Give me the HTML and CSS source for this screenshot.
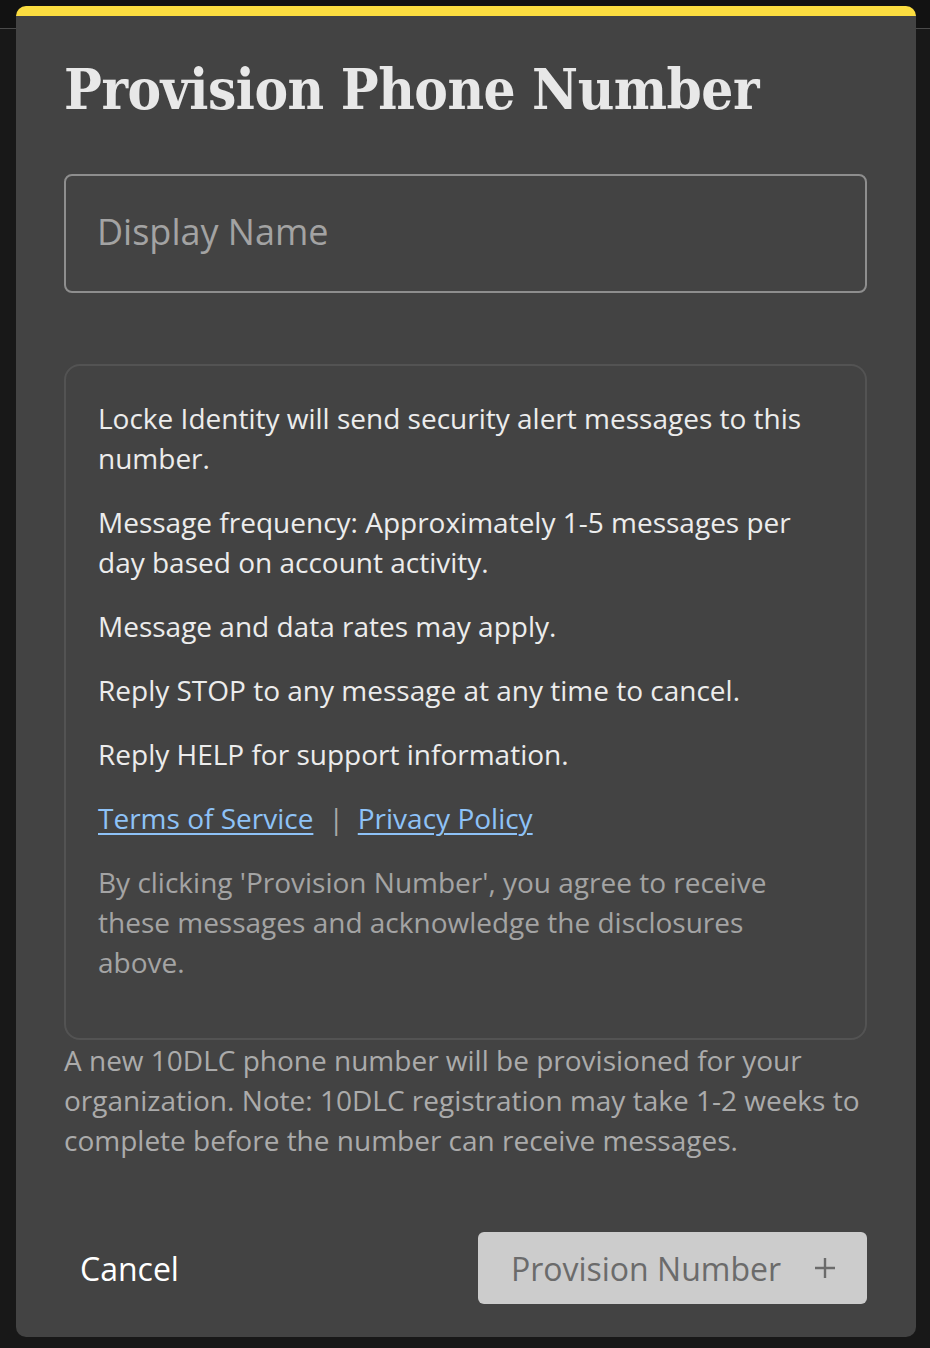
FILE: index.html
```html
<!DOCTYPE html>
<html lang="en">
<head>
<meta charset="utf-8">
<title>Provision Phone Number</title>
<link rel="stylesheet" href="styles.css">
</head>
<body>
<div class="backdrop">
  <div class="topbar"></div>
</div>
<div class="modal" role="dialog" aria-labelledby="modal-title">
  <h1 class="modal-title" id="modal-title">Provision Phone Number</h1>
  <div class="field">
    <input class="field-input" type="text" placeholder="Display Name">
  </div>
  <div class="disclosure">
    <p class="disclosure-text">Locke Identity will send security alert messages to this number.</p>
    <p class="disclosure-text">Message frequency: Approximately 1-5 messages per day based on account activity.</p>
    <p class="disclosure-text">Message and data rates may apply.</p>
    <p class="disclosure-text">Reply STOP to any message at any time to cancel.</p>
    <p class="disclosure-text">Reply HELP for support information.</p>
    <p class="disclosure-links"><a href="#" class="link">Terms of Service</a><span class="sep">|</span><a href="#" class="link">Privacy Policy</a></p>
    <p class="disclosure-consent">By clicking 'Provision Number', you agree to receive these messages and acknowledge the disclosures above.</p>
  </div>
  <p class="note">A new 10DLC phone number will be provisioned for your organization. Note: 10DLC registration may take 1-2 weeks to complete before the number can receive messages.</p>
  <div class="actions">
    <button class="btn-cancel" type="button">Cancel</button>
    <button class="btn-primary" type="button" disabled>
      <span>Provision Number</span>
      <svg class="plus" width="22" height="22" viewBox="0 0 22 22" aria-hidden="true"><path d="M11 1v20M1 11h20" stroke="currentColor" stroke-width="2.4" fill="none"/></svg>
    </button>
  </div>
</div>
</body>
</html>
```

FILE: styles.css
```css
html, body {
  margin: 0;
  padding: 0;
}
body {
  background: #181818;
  min-height: 1348px;
  font-family: "Open Sans", "Noto Sans", sans-serif;
}
.backdrop {
  height: 1348px;
}
.topbar {
  height: 28px;
  background: #121212;
  border-bottom: 1px solid #4a4a4a;
}
.modal {
  position: absolute;
  left: 16px;
  top: 6px;
  width: 900px;
  box-sizing: border-box;
  background: #434343;
  border-top: 10px solid #fbdd40;
  border-radius: 10px;
  padding: 37px 49px 33px 48px;
}
.modal-title {
  margin: 0 0 49px;
  font-family: "DejaVu Serif Condensed", "DejaVu Serif", "Liberation Serif", serif;
  font-stretch: condensed;
  font-weight: bold;
  font-size: 56px;
  line-height: 72px;
  color: #e8e8e8;
  letter-spacing: -0.5px;
}
.field {
  margin-bottom: 71px;
}
.field-input {
  display: block;
  width: 100%;
  box-sizing: border-box;
  height: 119px;
  background: transparent;
  border: 2px solid #8e8e8e;
  border-radius: 8px;
  padding: 0 31px 4px;
  font-family: "Open Sans", sans-serif;
  font-size: 36px;
  color: #e8e8e8;
  outline: none;
}
.field-input::placeholder {
  color: #a3a3a3;
}
.disclosure {
  border: 2px solid #535353;
  border-radius: 16px;
  padding: 32px 32px 32px;
}
.disclosure p {
  margin: 0 0 24px;
  font-size: 28px;
  line-height: 40px;
}
.disclosure-text {
  color: #ececec;
}
.disclosure-links {
  color: #a8a8a8;
}
.link {
  color: #8ec2f7;
  text-decoration: underline;
  text-underline-offset: 4px;
  text-decoration-thickness: 2px;
}
.sep {
  margin: 0 14px 0 15px;
}
.disclosure .disclosure-consent {
  color: #a4a4a4;
}
.note {
  margin: 0 0 72px;
  font-size: 28px;
  line-height: 40px;
  color: #ababab;
}
.actions {
  display: flex;
  justify-content: space-between;
  align-items: center;
}
.btn-cancel {
  background: none;
  border: none;
  padding: 0 16px;
  font-family: "Open Sans", sans-serif;
  font-size: 32px;
  color: #ffffff;
  cursor: pointer;
}
.btn-primary {
  display: flex;
  align-items: center;
  gap: 33px;
  height: 72px;
  padding: 0 31px 0 33px;
  background: #cccccc;
  border: none;
  border-radius: 6px;
  font-family: "Open Sans", sans-serif;
  font-size: 32px;
  color: #6b6b6b;
}
.plus {
  display: block;
}
```
